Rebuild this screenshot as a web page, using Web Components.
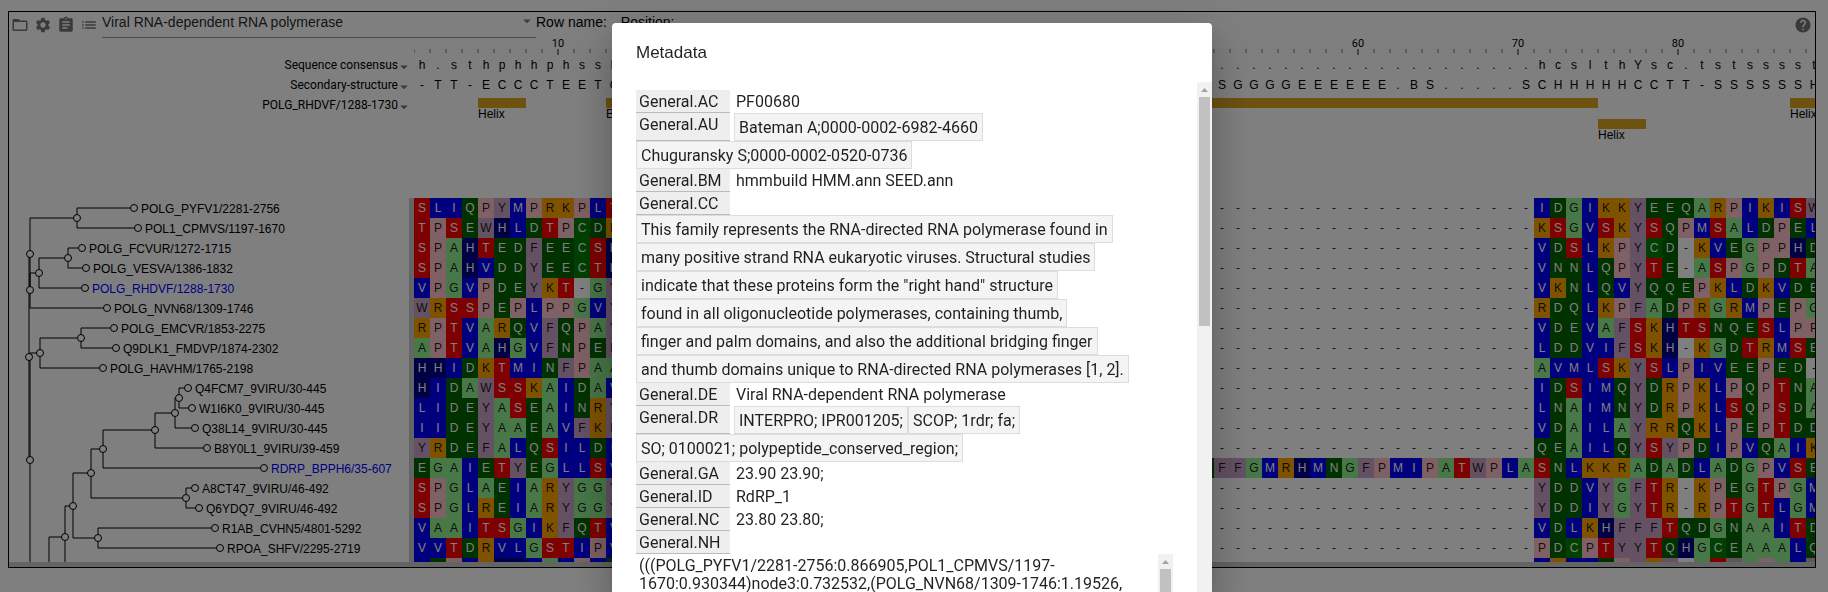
<!DOCTYPE html>
<html lang="en">
<head>
<meta charset="utf-8">
<title>Multiple sequence alignment</title>
<style>
  html { background: #fff; }
  body { margin: 11px 12px 24px 8px; font: 12px "Liberation Sans", sans-serif; color: #000; overflow: hidden; }
</style>
</head>
<body>
<msa-viewer></msa-viewer>
<modal-layer>
  <metadata-dialog></metadata-dialog>
</modal-layer>

<script>
const COLS = 88;
const gap = n => ' '.repeat(n);
const dashes = '-'.repeat(21);

/* [first columns, columns 50-70, columns 71-88] */
const ROWS = [
  ['SLIQPYMPRKPLT', dashes, 'IDGIKKYEEQARPIKISW'],
  ['TPSEWHLDTPCDK', dashes, 'KSGVSKYSQPMSALDPEL'],
  ['SPAHTEDFEECSH', dashes, 'VDSLKPYCD-KVEGPPHD'],
  ['SPAHVDDYEECTH', dashes, 'VNNLQPYTE-ASPGPDTA'],
  ['VPGVPDEYKT-GY', dashes, 'VKNLQVYQQEPKLDKVDE'],
  ['WRSSPEPLPPGVY', dashes, 'RDQLKPFADPRGRMPEPG'],
  ['RPTVARQVFQPAY', dashes, 'VDEVAFSKHTSNQESLPP'],
  ['APTVAHGVFNPEF', dashes, 'LDDVIFSKH-KGDTRMSE'],
  ['HHIDKTMINFPAA', dashes, 'AVMLSKYSLPIVEEPED-'],
  ['HIDAWSSKAIDAV', dashes, 'IDSIMQYDRPKLPQPTNA'],
  ['LIDEYASEAINRY', dashes, 'LNAIMNYDRPKLSQPSDA'],
  ['IIDEYAAEAVFKF', dashes, 'VDAILAYRRQKLPEPTDD'],
  ['YRDEFALQSILDL', dashes, 'QEAILQYSYPDIPVQAIK'],
  ['EGAIETYEGLLSV', 'EFFGMRHMNGFPMIPATWPLA', 'SNLKKRADADLADGPVSE'],
  ['SPGLAEIARYGGY', dashes, 'YDDVYGFTR-KPEGTPGM'],
  ['SPGLREIARYGGY', dashes, 'YDDIYGYTR-RPTGTLGM'],
  ['VAAITSGIKFQTV', dashes, 'VDLKHFFFTQDGNAAITD'],
  ['VVTDRVLGSTIPV', dashes, 'PDCPTYYTQHGCEAAALQ'],
  ['LDPLKHHLAVPVE', dashes, 'VKLLEPYKY-ASFAPAVY'],
].map(([a, b, c]) => a + gap(36) + b + c);

const LEAVES = [
  ['POLG_PYFV1/2281-2756', 134, 208], ['POL1_CPMVS/1197-1670', 138, 228],
  ['POLG_FCVUR/1272-1715', 82, 248], ['POLG_VESVA/1386-1832', 86, 268],
  ['POLG_RHDVF/1288-1730', 85, 288, 1], ['POLG_NVN68/1309-1746', 107, 308],
  ['POLG_EMCVR/1853-2275', 114, 328], ['Q9DLK1_FMDVP/1874-2302', 116, 348],
  ['POLG_HAVHM/1765-2198', 103, 368], ['Q4FCM7_9VIRU/30-445', 188, 388],
  ['W1I6K0_9VIRU/30-445', 192, 408], ['Q38L14_9VIRU/30-445', 195, 428],
  ['B8Y0L1_9VIRU/39-459', 207, 448], ['RDRP_BPPH6/35-607', 264, 468, 1],
  ['A8CT47_9VIRU/46-492', 195, 488], ['Q6YDQ7_9VIRU/46-492', 199, 508],
  ['R1AB_CVHN5/4801-5292', 215, 528], ['RPOA_SHFV/2295-2719', 220, 548],
];

/* Inner nodes: [x, y, [childX, childY], ...] */
const NODES = [
  [77, 218, [134, 208], [138, 228]],
  [30, 254, [77, 218], [30, 290]],
  [68, 258, [82, 248], [86, 268]],
  [39, 273, [68, 258], [85, 288]],
  [30, 290, [39, 273], [107, 308]],
  [81, 338, [114, 328], [116, 348]],
  [40, 353, [81, 338], [103, 368]],
  [29, 357, [30, 254], [30, 460]],
  [30, 460, [40, 353], [30, 600]],
  [179, 398, [188, 388], [192, 408]],
  [175, 413, [179, 398], [195, 428]],
  [155, 430, [175, 413], [207, 448]],
  [103, 449, [155, 430], [264, 468]],
  [186, 498, [195, 488], [199, 508]],
  [91, 473, [103, 449], [186, 498]],
  [98, 538, [215, 528], [220, 548]],
  [73, 506, [91, 473], [98, 538]],
  [65, 537, [73, 506], [65, 600]],
  [49, 600, [65, 537]],
];

const ICONS = {
  folder: 'M20 6h-8l-2-2H4c-1.1 0-1.99.9-1.99 2L2 18c0 1.1.9 2 2 2h16c1.1 0 2-.9 2-2V8c0-1.1-.9-2-2-2zm0 12H4V8h16v10z',
  settings: 'M19.14 12.94c.04-.3.06-.61.06-.94 0-.32-.02-.64-.07-.94l2.03-1.58c.18-.14.23-.41.12-.61l-1.92-3.32c-.12-.22-.37-.29-.59-.22l-2.39.96c-.5-.38-1.03-.7-1.62-.94l-.36-2.54c-.04-.24-.24-.41-.48-.41h-3.84c-.24 0-.43.17-.47.41l-.36 2.54c-.59.24-1.13.57-1.62.94l-2.39-.96c-.22-.08-.47 0-.59.22L2.74 8.87c-.12.21-.08.47.12.61l2.03 1.58c-.05.3-.09.63-.09.94s.02.64.07.94l-2.03 1.58c-.18.14-.23.41-.12.61l1.92 3.32c.12.22.37.29.59.22l2.39-.96c.5.38 1.03.7 1.62.94l.36 2.54c.05.24.24.41.48.41h3.84c.24 0 .44-.17.47-.41l.36-2.54c.59-.24 1.13-.56 1.62-.94l2.39.96c.22.08.47 0 .59-.22l1.92-3.32c.12-.22.07-.47-.12-.61l-2.01-1.58zM12 15.6c-1.98 0-3.6-1.62-3.6-3.6s1.62-3.6 3.6-3.6 3.6 1.62 3.6 3.6-1.62 3.6-3.6 3.6z',
  assignment: 'M19 3h-4.18C14.4 1.84 13.3 1 12 1c-1.3 0-2.4.84-2.82 2H5c-1.1 0-2 .9-2 2v14c0 1.1.9 2 2 2h14c1.1 0 2-.9 2-2V5c0-1.1-.9-2-2-2zm-7 0c.55 0 1 .45 1 1s-.45 1-1 1-1-.45-1-1 .45-1 1-1zm2 14H7v-2h7v2zm3-4H7v-2h10v2zm0-4H7V7h10v2z',
  list: 'M3 13h2v-2H3v2zm0 4h2v-2H3v2zm0-8h2V7H3v2zm4 4h14v-2H7v2zm0 4h14v-2H7v2zM7 7v2h14V7H7z',
  help: 'M12 2C6.48 2 2 6.48 2 12s4.48 10 10 10 10-4.48 10-10S17.52 2 12 2zm1 17h-2v-2h2v2zm2.07-7.75l-.9.92C13.45 12.9 13 13.5 13 15h-2v-.5c0-1.1.45-2.1 1.17-2.83l1.24-1.26c.37-.36.59-.86.59-1.41 0-1.1-.9-2-2-2s-2 .9-2 2H8c0-2.21 1.79-4 4-4s4 1.79 4 4c0 .88-.36 1.68-.93 2.25z',
  caret: 'M7 10l5 5 5-5z',
};

function define(name, render) {
  customElements.define(name, class extends HTMLElement {
    connectedCallback() {
      if (this.shadowRoot) return;
      this.attachShadow({ mode: 'open' }).innerHTML = render(this);
    }
  });
}

define('svg-icon', el => `
  <style>
    :host { display: block; width: 18px; height: 18px; color: rgba(0,0,0,.54); }
    svg { display: block; width: 100%; height: 100%; fill: currentColor; }
  </style>
  <svg viewBox="0 0 24 24" aria-hidden="true"><path d="${ICONS[el.getAttribute('name')]}"/></svg>`);

define('icon-button', el => `
  <style>
    :host { display: block; }
    button { display: block; padding: 0; border: 0; background: none; cursor: pointer; }
  </style>
  <button type="button" aria-label="${el.getAttribute('label')}"><svg-icon name="${el.getAttribute('name')}"></svg-icon></button>`);

define('msa-header', () => `
  <style>
    :host { display: flex; align-items: center; height: 26px; padding: 0 3px 0 2px; font-size: 14px; line-height: 21px; }
    .tools { display: flex; gap: 5px; padding-right: 4px; }
    .field { position: relative; width: 434px; height: 26px; }
    select { appearance: none; display: block; box-sizing: border-box; width: 100%; height: 26px; margin: 0; padding: 0 20px 5px 0;
      border: 0; border-bottom: 1px solid rgba(0,0,0,.42); border-radius: 0; background: none;
      font: 14px/20px "Liberation Sans", sans-serif; color: rgba(0,0,0,.87); }
    .field svg-icon { position: absolute; right: 0; top: 0; }
    .info { display: flex; gap: 14px; align-self: flex-start; }
    .help { margin-left: auto; }
  </style>
  <div class="tools">
    <icon-button name="folder" label="Open file"></icon-button>
    <icon-button name="settings" label="Settings"></icon-button>
    <icon-button name="assignment" label="Metadata"></icon-button>
    <icon-button name="list" label="Tracks"></icon-button>
  </div>
  <div class="field">
    <select aria-label="Alignment"><option>Viral RNA-dependent RNA polymerase</option></select>
    <svg-icon name="caret"></svg-icon>
  </div>
  <div class="info"><span>Row name:</span><span>Position:</span></div>
  <icon-button class="help" name="help" label="Help"></icon-button>`);

define('msa-ruler', () => `
  <style>
    :host { display: flex; height: 17px; overflow: hidden; font: 11px/11px Roboto, sans-serif; }
    .c { flex: none; width: 16px; }
    b { display: block; width: 24px; height: 11px; margin-left: -12px; font-weight: 400; text-align: center; }
    i { display: block; width: 2px; height: 4px; margin-left: -1px; background: #b8b8b8; }
    .major i { height: 6px; background: #909090; }
  </style>` + Array.from({ length: COLS }, (_, k) => {
    const n = k + 1, major = n % 10 === 0;
    const shown = n === 10 || n >= 60;
    return `<div class="c${major ? ' major' : ''}"><b>${major && shown ? n : ''}</b><i></i></div>`;
  }).join(''));

define('track-label', () => `
  <style>
    :host { display: flex; justify-content: flex-end; height: 20px; padding-right: 1px; }
    button { display: flex; align-items: center; padding: 0; border: 0; background: none; font: 12px/20px Roboto, sans-serif; color: #000; }
    svg-icon { margin: 4px 0 0 -3px; }
  </style>
  <button type="button"><slot></slot><svg-icon name="caret"></svg-icon></button>`);

define('letter-row', el => `
  <style>
    :host { display: flex; overflow: hidden; height: 20px; line-height: 20px; text-align: center; }
    span { flex: none; width: 16px; }
  </style>` + [...el.getAttribute('text')].map(ch => `<span>${ch.trim()}</span>`).join(''));

define('residue-row', el => {
  const group = {};
  for (const [cls, chars] of Object.entries({ sm: 'AG', cy: 'C', po: 'DENQ', al: 'ILMV', ar: 'FWY', hi: 'H', ba: 'KR', pr: 'P', hy: 'ST' }))
    for (const ch of chars) group[ch] = cls;
  return `
  <style>
    :host { display: flex; height: 20px; line-height: 21px; text-align: center; color: rgba(0,0,0,.87); }
    span { flex: none; width: 16px; }
    .sm { background: lightgreen; } .cy { background: green; color: #fff; }
    .po { background: darkgreen; color: #fff; } .al { background: blue; color: #fff; }
    .ar { background: #c8a2c8; } .hi { background: darkblue; color: #fff; }
    .ba { background: orange; } .pr { background: pink; } .hy { background: red; color: #fff; }
  </style>` + [...el.getAttribute('seq')].map(ch => `<span class="${group[ch] || ''}">${ch.trim()}</span>`).join('');
});

define('feature-track', () => `
  <style>
    :host { display: grid; grid-template-columns: repeat(${COLS}, 16px); grid-auto-rows: 21px; padding-top: 3px; overflow: hidden; }
    div { white-space: nowrap; line-height: 13px; }
    div::before { content: ""; display: block; height: 10px; background: goldenrod; }
  </style>
  <div style="grid-area: 1 / 5 / auto / span 3">Helix</div>
  <div style="grid-area: 1 / 13 / auto / span 3">Beta</div>
  <div style="grid-area: 1 / 49 / auto / span 26"></div>
  <div style="grid-area: 2 / 75 / auto / span 3">Helix</div>
  <div style="grid-area: 1 / 87 / auto / span 3">Helix</div>`);

define('phylo-tree', () => {
  const lines = NODES.map(([x, y, ...kids]) =>
    kids.map(([cx, cy]) => `M${x} ${y}V${cy}H${cx}`).join('')).join('');
  const dot = (x, y) => `<circle cx="${x}" cy="${y}" r="3.5"/>`;
  return `
  <style>
    :host { display: block; }
    svg { display: block; width: 400px; height: 364px; }
    path { fill: none; stroke: #000; }
    circle { fill: #fff; stroke: #000; }
    text { font: 12px "Liberation Sans", sans-serif; }
    .on { fill: blue; }
  </style>
  <svg viewBox="9 198 400 364"><path d="${lines}"/>
    ${NODES.filter(n => n[1] < 600).map(n => dot(n[0], n[1])).join('')}
    ${LEAVES.map(([t, x, y, on]) => `${dot(x, y)}<text x="${x + 7}" y="${y + 5}"${on ? ' class="on"' : ''}>${t}</text>`).join('')}
  </svg>`;
});

define('msa-viewer', () => `
  <style>
    :host { display: block; border: 1px solid #000; }
    .grid { display: grid; grid-template-columns: 405px minmax(0, 1fr); }
    .tracks { grid-template-rows: 17px 20px 20px 103px; }
    .tracks msa-ruler { grid-column: 2; }
    .body { grid-template-columns: 400px 5px minmax(0, 1fr); height: 364px; overflow: hidden; }
    .split { background: #c8c8c8; }
    .rows { overflow: hidden; }
    .resize { height: 5px; background: #c8c8c8; }
  </style>
  <msa-header></msa-header>
  <div class="grid tracks">
    <msa-ruler></msa-ruler>
    <track-label>Sequence consensus</track-label>
    <letter-row text="h.sthphhphssh${gap(37)}${'.'.repeat(20)}hcslthYsc.tstsssst"></letter-row>
    <track-label>Secondary-structure</track-label>
    <letter-row text="-TT-ECCCTEETC${gap(37)}SGGGGEEEEEE.BS.....SCHHHHHCCTT-SSSSSSH"></letter-row>
    <track-label>POLG_RHDVF/1288-1730</track-label>
    <feature-track></feature-track>
  </div>
  <div class="grid body">
    <phylo-tree></phylo-tree>
    <div class="split"></div>
    <div class="rows">${ROWS.map(s => `<residue-row seq="${s}"></residue-row>`).join('')}</div>
  </div>
  <div class="resize"></div>`);

define('modal-layer', () => `
  <style>
    :host { position: fixed; inset: 0; display: flex; justify-content: center; box-sizing: border-box;
      padding: 23px 4px 0 0; background: rgba(0,0,0,.5); overflow: hidden; }
  </style>
  <slot></slot>`);

define('scroll-bar', () => `
  <style>
    :host { display: block; box-sizing: border-box; width: 15px; padding: 6px 2px 0; background: #f1f1f1; overflow: hidden; }
    svg { display: block; width: 7px; height: 4px; margin: 0 auto 5px; fill: #a3a3a3; }
    div { height: 229px; background: #c1c1c1; }
  </style>
  <svg viewBox="0 0 7 4"><path d="M3.5 0L7 4H0z"/></svg><div></div>`);

define('meta-entry', el => `
  <style>
    :host { display: flex; flex-wrap: wrap; }
    .name { box-sizing: border-box; width: 94px; margin-right: 4px; padding: 3px 3px 1px; background: #eee; border-bottom: 1px solid #bbb; }
    ::slotted(span) { padding: 3px 2px 1px; }
    ::slotted(em) { font-style: normal; padding: 5px 4px 3px; border: 1px solid #ddd; background: #f4f4f4; white-space: nowrap; }
  </style>
  <div class="name">${el.getAttribute('name')}</div><slot></slot>`);

define('metadata-dialog', () => `
  <style>
    :host { display: block; width: 600px; max-width: 100%; }
    dialog { position: static; display: flex; flex-direction: column; box-sizing: border-box; width: 100%; max-width: none; height: 100%; max-height: none;
      margin: 0; padding: 0; border: 0; border-radius: 4px 4px 0 0; background: #fff; color: rgba(0,0,0,.87);
      box-shadow: 0 11px 15px -7px rgba(0,0,0,.2), 0 24px 38px 3px rgba(0,0,0,.14), 0 9px 46px 8px rgba(0,0,0,.12); }
    h2 { flex: none; margin: 0; padding: 20px 24px 19px; font: 17px/20px "Liberation Sans", sans-serif; }
    .scroll { flex: 1; min-height: 0; display: flex; overflow: hidden; font: 16px/18px Roboto, sans-serif; }
    .content { flex: 1; min-width: 0; padding: 8px 24px 0; }
    .tree { display: flex; height: 200px; overflow: hidden; }
    .tree p { flex: 1; margin: 0; padding: 3px; }
  </style>
  <dialog open aria-labelledby="title">
    <h2 id="title">Metadata</h2>
    <div class="scroll">
      <div class="content">
        <meta-entry name="General.AC"><span>PF00680</span></meta-entry>
        <meta-entry name="General.AU"><em>Bateman A;0000-0002-6982-4660</em><em>Chuguransky S;0000-0002-0520-0736</em></meta-entry>
        <meta-entry name="General.BM"><span>hmmbuild HMM.ann SEED.ann</span></meta-entry>
        <meta-entry name="General.CC"><em>This family represents the RNA-directed RNA polymerase found in</em><em>many positive strand RNA eukaryotic viruses. Structural studies</em><em>indicate that these proteins form the "right hand" structure</em><em>found in all oligonucleotide polymerases, containing thumb,</em><em>finger and palm domains, and also the additional bridging finger</em><em>and thumb domains unique to RNA-directed RNA polymerases [1, 2].</em></meta-entry>
        <meta-entry name="General.DE"><span>Viral RNA-dependent RNA polymerase</span></meta-entry>
        <meta-entry name="General.DR"><em>INTERPRO; IPR001205;</em><em>SCOP; 1rdr; fa;</em><em>SO; 0100021; polypeptide_conserved_region;</em></meta-entry>
        <meta-entry name="General.GA"><span>23.90 23.90;</span></meta-entry>
        <meta-entry name="General.ID"><span>RdRP_1</span></meta-entry>
        <meta-entry name="General.NC"><span>23.80 23.80;</span></meta-entry>
        <meta-entry name="General.NH"></meta-entry>
        <div class="tree">
          <p>(((POLG_PYFV1/2281-2756:0.866905,POL1_CPMVS/1197-<br>1670:0.930344)node3:0.732532,(POLG_NVN68/1309-1746:1.19526,</p>
          <scroll-bar></scroll-bar>
        </div>
      </div>
      <scroll-bar></scroll-bar>
    </div>
  </dialog>`);
</script>
</body>
</html>
